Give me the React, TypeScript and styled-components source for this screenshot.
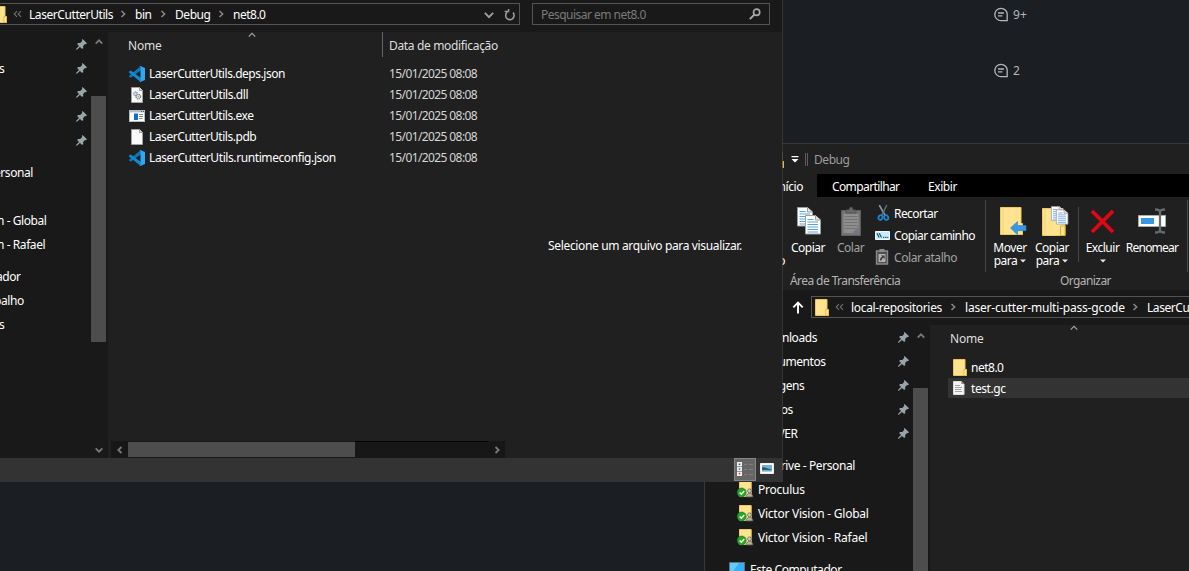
import React from "react";
import styled, { createGlobalStyle, css } from "styled-components";

const GlobalStyle = createGlobalStyle`
  * { box-sizing: border-box; }
  body { margin: 0; background: #1b1e23; overflow: hidden; }
  svg { display: block; flex: none; }
`;

/* ---------- desktop and window frames ---------- */

const Desktop = styled.main`
  position: relative;
  width: 1189px;
  height: 571px;
  overflow: hidden;
  background: #1b1e23;
  color: #fff;
  font: 12px/17px "Noto Sans", "Open Sans", sans-serif;
  letter-spacing: -0.43px;
  white-space: nowrap;
`;

const FrontWindow = styled.section`
  position: absolute;
  z-index: 2;
  left: 0;
  top: 0;
  width: 783px;
  height: 482px;
  display: flex;
  flex-direction: column;
  overflow: hidden;
  background: #202020;
  background-clip: padding-box;
  border-right: 1px solid rgba(62, 62, 62, 0.75);
`;

const BackWindow = styled.section`
  position: absolute;
  z-index: 1;
  left: 704px;
  top: 143px;
  width: 520px;
  height: 460px;
  display: flex;
  flex-direction: column;
  overflow: hidden;
  background: #202020;
  border: 1px solid #373839;
`;

const Counters = styled.aside`
  position: absolute;
  left: 994px;
  top: 6px;
  display: flex;
  flex-direction: column;
  gap: 39px;
`;

const Counter = styled.div`
  display: flex;
  align-items: center;
  gap: 5px;
  height: 17px;
  color: #b4b6b9;
  letter-spacing: 0.2px;
`;

const Text = styled.span<{ $track?: number }>`
  flex: none;
  letter-spacing: ${(p) => p.$track ?? -0.43}px;
`;

/* ---------- address row ---------- */

const AddressRow = styled.div<{ $compact?: boolean }>`
  flex: none;
  display: flex;
  background: #191919;
  ${(p) =>
    p.$compact
      ? css`
          height: 35px;
          padding: 6px 0 0 87px;
          gap: 7px;
        `
      : css`
          height: 32px;
          padding-top: 3px;
          gap: 12px;
        `}
`;

const PathBox = styled.div<{ $wide?: boolean }>`
  display: flex;
  align-items: center;
  height: 22px;
  flex: none;
  width: ${(p) => (p.$wide ? "460px" : "521px")};
  margin-left: ${(p) => (p.$wide ? "0" : "-1px")};
  border: 1px solid #535353;
  padding-left: ${(p) => (p.$wide ? "3px" : "0")};
`;

const FolderSlot = styled.span<{ $cut?: boolean }>`
  display: flex;
  flex: none;
  width: ${(p) => (p.$cut ? "7px" : "14px")};
  justify-content: flex-end;
  overflow: hidden;
`;

const Back = styled.span`
  display: flex;
  flex: none;
  width: 22px;
  padding-right: 2px;
  justify-content: center;
`;

const Crumb = styled.span<{ $w: number }>`
  display: flex;
  flex: none;
  align-items: center;
  justify-content: space-between;
  width: ${(p) => p.$w}px;
  padding-right: 8px;
`;

const PathTools = styled.span`
  display: flex;
  align-items: center;
  gap: 10px;
  margin-left: auto;
  padding: 1px 3px 0 0;
`;

const SearchBox = styled.div`
  display: flex;
  align-items: center;
  justify-content: space-between;
  width: 238px;
  height: 22px;
  padding: 0 8px;
  border: 1px solid #535353;
  color: #7b7b7b;
`;

const UpButton = styled.span`
  display: flex;
  align-items: center;
  width: 12px;
  height: 22px;
`;

/* ---------- window body ---------- */

const Body = styled.div`
  flex: 1;
  min-height: 0;
  display: flex;
`;

const Sidebar = styled.nav<{ $w: number }>`
  flex: none;
  display: flex;
  width: ${(p) => p.$w}px;
  background: #191919;
`;

const Tree = styled.ul`
  flex: 1;
  min-width: 0;
  margin: 0;
  padding: 0;
  list-style: none;
`;

const TreeRow = styled.li<{ $gap?: number; $indent?: number }>`
  display: flex;
  align-items: center;
  height: 24px;
  margin-top: ${(p) => p.$gap ?? 0}px;
  padding: 0 4px 0 ${(p) => p.$indent ?? 0}px;
`;

const PinSlot = styled.span`
  margin-left: auto;
`;

const TreeIcon = styled.span<{ $w: number }>`
  flex: none;
  width: ${(p) => p.$w}px;
`;

const VScroll = styled.div<{ $drop?: number }>`
  flex: none;
  display: flex;
  flex-direction: column;
  align-items: center;
  width: 15px;
  margin-right: 2px;
  padding-top: ${(p) => p.$drop ?? 0}px;
`;

const VArrow = styled.span<{ $h: number }>`
  flex: none;
  display: flex;
  align-items: center;
  height: ${(p) => p.$h}px;
`;

const VThumb = styled.span<{ $top: number; $h: number }>`
  flex: none;
  width: 15px;
  height: ${(p) => p.$h}px;
  margin-top: ${(p) => p.$top}px;
  background: #4d4d4d;
`;

const Spacer = styled.span`
  flex: 1;
`;

const FilePane = styled.div`
  flex: none;
  display: flex;
  flex-direction: column;
  width: 397px;
`;

const Columns = styled.div`
  display: flex;
  height: 31px;
  color: #dedede;
`;

const NameColumn = styled.div`
  flex: none;
  display: grid;
  grid-template-columns: 120px 12px;
  width: 275px;
  height: 25px;
  padding: 0 0 0 20px;
`;

const NameHead = styled.span`
  padding-top: 5px;
  letter-spacing: -0.2px;
`;

const SortMark = styled.span`
  margin-top: -1px;
`;

const DateColumn = styled.div`
  height: 25px;
  border-left: 1px solid #636363;
  margin-left: -1px;
  padding: 5px 0 0 6px;
  letter-spacing: -0.34px;
`;

const FileRow = styled.div`
  display: grid;
  grid-template-columns: 20px 240px auto;
  align-items: center;
  height: 21px;
  padding-left: 21px;
`;

const DateCell = styled.span`
  color: #d6d6d6;
  letter-spacing: -0.6px;
`;

const HScroll = styled.div`
  display: flex;
  align-items: center;
  width: 394px;
  height: 17px;
  margin: auto 0 0 3px;
  background: #171717;
`;

const HArrow = styled.span<{ $w: number }>`
  display: flex;
  justify-content: center;
  width: ${(p) => p.$w}px;
`;

const HThumb = styled.span`
  width: 227px;
  height: 15px;
  background: #4d4d4d;
`;

const HTrack = styled.span`
  width: 133px;
  height: 17px;
  border-top: 1px solid #000;
`;

const Preview = styled.div`
  flex: 1;
  display: flex;
  justify-content: center;
  padding: 205px 0 0 3px;
  letter-spacing: -0.35px;
`;

const StatusBar = styled.footer`
  flex: none;
  display: flex;
  align-items: flex-start;
  justify-content: flex-end;
  gap: 4px;
  height: 24px;
  padding-right: 8px;
  background: #333;
`;

const ViewToggle = styled.span<{ $on?: boolean }>`
  display: flex;
  align-items: center;
  justify-content: center;
  width: ${(p) => (p.$on ? "22px" : "14px")};
  height: ${(p) => (p.$on ? "23px" : "21px")};
  background: ${(p) => (p.$on ? "#666" : "transparent")};
  border: ${(p) => (p.$on ? "1px solid #868686" : "none")};
`;

/* ---------- ribbon ---------- */

const TitleBar = styled.header`
  flex: none;
  display: flex;
  align-items: center;
  height: 30px;
  padding-left: 65px;
  color: #9c9c9c;
`;

const TitleIcon = styled.span`
  width: 21px;
`;

const QuickDivider = styled.span`
  width: 3px;
  height: 13px;
  margin: 0 6px 0 6px;
  border: solid #5e5e5e;
  border-width: 0 1px;
`;

const Tabs = styled.div`
  flex: none;
  display: flex;
  height: 23px;
  line-height: 25px;
  background: #000;
`;

const Tab = styled.span<{ $w: number }>`
  width: ${(p) => p.$w}px;
  padding-left: 15px;
`;

const ActiveTab = styled(Tab)`
  padding: 0 14px 0 0;
  background: #202020;
  text-align: right;
`;

const Ribbon = styled.div`
  flex: none;
  display: flex;
  height: 93px;
  padding-top: 3px;
`;

const Group = styled.div<{ $w: number }>`
  flex: none;
  display: flex;
  flex-direction: column;
  width: ${(p) => p.$w}px;
`;

const GroupRule = styled.span`
  flex: none;
  width: 1px;
  height: 72px;
  background: #484848;
`;

const InnerRule = styled.span`
  flex: none;
  width: 1px;
  height: 55px;
  margin: 7px 0 0 8px;
  background: #484848;
`;

const Tools = styled.div`
  display: flex;
  height: 72px;
`;

const BigButton = styled.div<{ $w: number; $dim?: boolean }>`
  flex: none;
  display: flex;
  flex-direction: column;
  align-items: center;
  width: ${(p) => p.$w}px;
  line-height: 13px;
  letter-spacing: -0.48px;
  color: ${(p) => (p.$dim ? "#a3a3a3" : "#fff")};
`;

const BigIcon = styled.span<{ $pad?: number }>`
  display: flex;
  align-items: center;
  height: 41px;
  padding: 1px 0 0 ${(p) => p.$pad ?? 0}px;
`;

const PinLabel = styled.div`
  width: 80px;
  padding-top: 54px;
  line-height: 13px;
  text-align: right;
`;

const Menu = styled.span`
  display: flex;
  align-items: center;
  gap: 3px;
  height: 13px;
`;

const SmallList = styled.div`
  display: flex;
  flex-direction: column;
  padding: 2px 0 0 7px;
`;

const SmallButton = styled.div<{ $dim?: boolean }>`
  display: grid;
  grid-template-columns: 17px auto;
  align-items: center;
  height: 22px;
  color: ${(p) => (p.$dim ? "#a3a3a3" : "#fff")};
`;

const Caption = styled.div<{ $pad: number }>`
  padding-left: ${(p) => p.$pad}px;
  color: #b5b5b5;
  letter-spacing: -0.58px;
`;

const Listing = styled.div`
  flex: 1;
  margin-left: 1px;
`;

const ListHead = styled(Columns)`
  height: 32px;
  margin-left: -1px;
`;

const ListRow = styled.div<{ $selected?: boolean }>`
  display: grid;
  grid-template-columns: 18px auto;
  align-items: center;
  height: 21px;
  margin-left: 17px;
  padding-left: 5px;
  border-bottom: 1px solid #202020;
  background: ${(p) => (p.$selected ? "#333" : "transparent")};
`;

/* ---------- icons ---------- */

const Folder = () => (
  <svg width="14" height="17" viewBox="0 0 14 17">
    <path d="M.5.5h11.5v10h1.5v6H.5z" fill="#ffe391" stroke="#edc64f" />
    <path d="M10.8 10.5h2.7v6h-2.7z" fill="#ffe799" stroke="#dfb236" strokeWidth=".8" />
  </svg>
);

const chevrons: Record<string, string> = {
  right: "M2.5 1 5.7 4 2.5 7",
  left: "M5.5 1 2.3 4 5.5 7",
  up: "M.7 5.7 4 2.3 7.3 5.7",
  down: "M.7 2.3 4 5.7 7.3 2.3",
};

type ChevronProps = { dir?: string; size?: number; color?: string; weight?: number };

const Chevron = ({ dir = "right", size = 8, color = "#8a8a8a", weight = 1.5 }: ChevronProps) => (
  <svg width={size} height={size} viewBox="0 0 8 8" fill="none" stroke={color} strokeWidth={weight}>
    <path d={chevrons[dir]} />
  </svg>
);

const DoubleBack = () => (
  <svg width="9" height="8" viewBox="0 0 9 8" fill="none" stroke="#6f6f6f" strokeWidth="1.1">
    <path d="M4 1.2 1.2 4 4 6.8M8 1.2 5.2 4 8 6.8" />
  </svg>
);

const Pin = () => (
  <svg width="11" height="11" viewBox="0 0 11 11">
    <path d="M6.6 0 11 4.2 9.9 5.2 9 5 7.1 7l.2 2.1-1.1 1L3.9 7.9.9 10.8l-.8-.3.1-.8L3 6.9 1.1 4.9l1-1 2.1.1L6.2 2 5.9 1z" fill="#9aa5ab" />
  </svg>
);

const Refresh = () => (
  <svg width="12" height="12" viewBox="0 0 12 12" fill="none" stroke="#9a9a9a">
    <path d="M9 3.6A4.2 4.2 0 1 1 3.2 3.2" strokeWidth="1.6" />
    <path d="M5.6 0v4.6M5.6 4h4.6" strokeWidth="1.5" transform="rotate(-90 6 3.4) translate(1.2 -2)" />
  </svg>
);

const Magnifier = () => (
  <svg width="12" height="12" viewBox="0 0 12 12" fill="none" stroke="#a8a8a8">
    <circle cx="7.6" cy="4.2" r="3.1" strokeWidth="1.7" />
    <path d="M5.3 6.6.8 11.1" strokeWidth="2" />
  </svg>
);

const VsCode = () => (
  <svg width="16" height="16" viewBox="0 0 16 16">
    <path d="M11.3.4 12 4.2 1.8 11.8 0 10.6V9.8z" fill="#0b76b8" />
    <path d="M0 5.5 1.7 4.4 12 12l-.7 3.8L0 6.4z" fill="#1489d0" />
    <path d="M11.3 0 16 2v12l-4.7 2-.9-.6 1.1-.5V1.2L10.4.6z" fill="#2ea8f5" />
  </svg>
);

const Page = ({ gear = false }: { gear?: boolean }) => (
  <svg width="16" height="16" viewBox="0 0 16 16">
    <path d="M2.5.5h8l3 3v12h-11z" fill="#fafafa" stroke="#a2a2a2" />
    <path d="M10.5.5v3h3" fill="#ddd" stroke="#a2a2a2" />
    {gear && (
      <g fill="#dfe3e5" stroke="#7f8a8f">
        <circle cx="6.5" cy="6.8" r="1.8" strokeWidth="1.3" strokeDasharray="1.2 .5" />
        <circle cx="9.3" cy="9.6" r="2.3" strokeWidth="1.3" strokeDasharray="1.2 .5" />
        <circle cx="9.3" cy="9.6" r=".7" fill="#98a4a9" stroke="none" />
      </g>
    )}
  </svg>
);

const Exe = () => (
  <svg width="16" height="12" viewBox="0 0 16 12">
    <path d="M0 0h16v12H0z" fill="#b6bcc0" />
    <path d="M1 2.4h14V11H1z" fill="#fff" />
    <path d="M12 1h1v1h-1zM14 1h1v1h-1z" fill="#555" />
    <path d="M5 3.5h4V10H5z" fill="#0e6fce" />
    <path d="M10 4h4v1h-4zM10 6h4v1h-4zM10 8h3.5v1H10z" fill="#8b8b8b" />
  </svg>
);

const TextDoc = () => (
  <svg width="12" height="14" viewBox="0 0 12 14">
    <path d="M.5.5h8L11 3v10.5H.5z" fill="#f5f5f5" stroke="#ddd" />
    <path d="M8.3 0v3h3.2" fill="#888" />
    <path d="M2 4.5h5M2 6.5h7M2 8.5h6M2 10.5h7" stroke="#a4a4a4" />
  </svg>
);

const SyncedFolder = () => (
  <svg width="17" height="17" viewBox="0 0 17 17">
    <path d="M2.5.5h11.7v15H2.5z" fill="#ffe38f" stroke="#f0cc62" />
    <circle cx="12.5" cy="9.8" r="1.9" fill="#d8d0b0" stroke="#6d6c68" strokeWidth=".9" />
    <path d="M9.3 15.8c0-4.5 6.4-4.5 6.4 0z" fill="#b9b5a5" stroke="#6d6c68" strokeWidth=".9" />
    <circle cx="4.7" cy="11.5" r="4.5" fill="#28a428" stroke="#0e7f18" strokeWidth=".6" />
    <path d="m2.6 11.5 1.7 1.7 2.9-3.3" fill="none" stroke="#fff" strokeWidth="1.5" />
  </svg>
);

const Monitor = () => (
  <svg width="16" height="14" viewBox="0 0 16 14">
    <path d="M.5.5h15v11H.5z" fill="#36b0f2" stroke="#5c7488" />
    <path d="M1 1h9L3 11H1z" fill="#66c9f8" />
    <path d="M4 13h8v1H4z" fill="#889" />
  </svg>
);

const Comment = () => (
  <svg width="14" height="15" viewBox="0 0 14 15" fill="none" stroke="#b4b6b9" strokeWidth="1.3">
    <path d="M13.2 13.7H7A6.2 6.2 0 1 1 13.2 7.4z" />
    <path d="M4 6h6M4 8.9h4.4" />
  </svg>
);

const DetailsView = () => (
  <svg width="18" height="15" viewBox="0 0 18 15">
    <path d="M1 0h5v14H1z" fill="#f2f2f2" />
    <path d="M2.7 1.5h1.6v1.6H2.7z" fill="#555" />
    <path d="M2.7 6.2h1.6v1.6H2.7z" fill="#3f7fb5" />
    <path d="M2.7 10.8h1.6v1.6H2.7z" fill="#d03b3b" />
    <path d="M1 4.6h5M1 9.4h5" stroke="#777" strokeWidth=".8" />
    <path d="M8 2.5h3M13 2.5h4M8 7.5h3M13 7.5h4M8 12.5h3M13 12.5h4" stroke="#7e7e7e" />
  </svg>
);

const PictureView = () => (
  <svg width="14" height="11" viewBox="0 0 14 11">
    <path d="M.5.5h13v10H.5z" fill="#fff" stroke="#eee" />
    <path d="M2 2h10v7H2z" fill="#6fb0e2" />
    <path d="M2 4.5c3-1 6 1.5 10 2.2v.8H2z" fill="#2d5e66" />
    <path d="M2 7.5h10V9H2z" fill="#a5d0ea" />
  </svg>
);

const Sheet = ({ x, y, s = 1 }: { x: number; y: number; s?: number }) => (
  <g transform={`translate(${x} ${y}) scale(${s})`}>
    <path d="M.5.5h10L15.5 5v14H.5z" fill="#fff" stroke="#9a9fa4" />
    <path d="M10.5.5V5h5" fill="#e2e2e2" stroke="#9a9fa4" />
    <path d="M2.5 4.5h6M2.5 7h10.5M2.5 9.5h10.5M2.5 12h10.5M2.5 14.5h10.5M2.5 17h10.5" stroke="#5ea0dc" />
  </g>
);

const CopyIcon = () => (
  <svg width="25" height="28" viewBox="0 0 25 28">
    <Sheet x={0} y={0} />
    <Sheet x={8} y={8} />
  </svg>
);

const PasteIcon = () => (
  <svg width="20" height="29" viewBox="0 0 20 29">
    <path d="M.5 3.5h19v25H.5z" fill="#747474" stroke="#5e5e5e" />
    <path d="M2.5 7h15v19h-15z" fill="#8e8e8e" />
    <path d="M11 26.5 17.5 19v7.5z" fill="#76768a" />
    <path d="M5 6V3h3l1-2.5h2L12 3h3v3z" fill="#696969" stroke="#555" />
    <path d="M3.5 9.5h13M3.5 12.5h13M3.5 15.5h13M3.5 18.5h13M3.5 21.5h11" stroke="#737373" />
  </svg>
);

const Scissors = () => (
  <svg width="13" height="16" viewBox="0 0 13 16" fill="none">
    <path d="M2.2 0 8.2 10.5" stroke="#8299a8" strokeWidth="1.6" />
    <path d="M9.8 0 4.8 10.5" stroke="#5d6e7a" strokeWidth="1.5" />
    <ellipse cx="3.5" cy="12.6" rx="2" ry="2.4" stroke="#1e83c8" strokeWidth="1.8" transform="rotate(25 3.5 12.6)" />
    <ellipse cx="9.2" cy="12.6" rx="2" ry="2.4" stroke="#1e83c8" strokeWidth="1.8" transform="rotate(-25 9.2 12.6)" />
  </svg>
);

const WideGlyph = styled.span`
  margin-left: -2px;
`;

const PathIcon = () => (
  <WideGlyph>
    <svg width="15" height="9" viewBox="0 0 15 9">
      <path d="M.5.5h14v8H.5z" fill="#c9ecfb" stroke="#eaf8ff" />
      <path d="m2 2.2 2.2 4.3M4.3 2.2l2.2 4.3M8 6.3h1.3M10.2 6.3h1.3M12.3 6.3h1" stroke="#15506f" strokeWidth="1.2" />
    </svg>
  </WideGlyph>
);

const ShortcutIcon = () => (
  <WideGlyph>
    <svg width="14" height="16" viewBox="0 0 14 16">
      <path d="M1.5 2h11v13h-11z" fill="#4f4f4f" stroke="#8a8a8a" strokeWidth="1.4" />
      <path d="M4.5 0h5v3h-5z" fill="#8a8a8a" />
      <path d="M3.5 5h7v8h-7z" fill="#b1b1b1" />
      <path d="M5 11.5c0-2 .6-3 2.4-3.7L6 6.4h3.6V10L8.4 8.8C7.2 9.4 6.6 10 6.6 11.5z" fill="#3a3a3a" />
    </svg>
  </WideGlyph>
);

const MoveIcon = () => (
  <svg width="27" height="28" viewBox="0 0 27 28">
    <path d="M.5.5H21v16h1.5v11H.5z" fill="#ffe391" stroke="#eecb5f" />
    <path d="M3 1v26" stroke="#f3d372" />
    <path d="m10.500 21 7-6.500v4H26v5.200h-8.500v4z" fill="#3797e4" stroke="#2b80c8" strokeWidth=".6" />
  </svg>
);

const CopyToIcon = () => (
  <svg width="27" height="30" viewBox="0 0 27 30">
    <path d="M.5 2.5H21v16h2v11H.5z" fill="#ffe391" stroke="#eecb5f" />
    <path d="M3 3v26" stroke="#f3d372" />
    <path d="M18.5 20H23v9.5h-4.5z" fill="#ffe391" stroke="#dcb23c" />
    <Sheet x={9} y={0} s={0.77} />
    <Sheet x={14} y={3.5} s={0.77} />
  </svg>
);

const DeleteIcon = () => (
  <svg width="25" height="25" viewBox="0 0 25 25" fill="none" stroke="#e30613" strokeWidth="3.8">
    <path d="m2 2 21 21M23 2 2 23" />
  </svg>
);

const RenameIcon = () => (
  <svg width="29" height="26" viewBox="0 0 29 26">
    <path d="M.5 7.5h27v11H.5z" fill="#fff" stroke="#a9adb0" />
    <path d="M3 10h13v6H3z" fill="#3797e4" />
    <path d="M17 1.5c3 0 5 .5 5 2.5 0-2 2-2.5 5-2.5M17 24.5c3 0 5-.5 5-2.5 0 2 2 2.5 5 2.5M22 3v20" fill="none" stroke="#666b6e" strokeWidth="2.3" />
  </svg>
);

const Down = () => (
  <svg width="6" height="4" viewBox="0 0 6 4">
    <path d="M0 .5h6L3 3.5z" fill="#e5e5e5" />
  </svg>
);

const QuickMenu = () => (
  <svg width="8" height="7" viewBox="0 0 8 7" fill="#fff">
    <path d="M.5 0h7v1.2h-7zM.5 3h7L4 6.5z" />
  </svg>
);

const UpArrow = () => (
  <svg width="12" height="13" viewBox="0 0 12 13" fill="none" stroke="#fff" strokeWidth="1.9">
    <path d="M6 12.5V1.8M1.3 6.3 6 1.6l4.7 4.7" />
  </svg>
);

/* ---------- content ---------- */

const files = [
  { name: "LaserCutterUtils.deps.json", icon: <VsCode />, track: -0.47 },
  { name: "LaserCutterUtils.dll", icon: <Page gear />, track: -0.43 },
  { name: "LaserCutterUtils.exe", icon: <Exe />, track: -0.45 },
  { name: "LaserCutterUtils.pdb", icon: <Page />, track: -0.45 },
  { name: "LaserCutterUtils.runtimeconfig.json", icon: <VsCode />, track: -0.41 },
];

const frontTree = [
  { label: "", pin: true },
  { label: "s", pin: true, shift: -1 },
  { label: "", pin: true },
  { label: "", pin: true },
  { label: "", pin: true },
  { label: "ersonal", gap: 8, shift: -6 },
  { label: "n - Global", gap: 24, shift: -3 },
  { label: "n - Rafael", shift: -3 },
  { label: "ador", gap: 8, shift: -4 },
  { label: "balho", shift: -6 },
  { label: "s", shift: -1 },
];

const ClippedLabel = styled.span<{ $shift: number }>`
  margin-left: ${(p) => p.$shift}px;
`;

const pinned = ["Downloads", "Documentos", "Imagens", "Vídeos", "SERVER"];
const synced = ["Proculus", "Victor Vision - Global", "Victor Vision - Rafael"];

function FrontExplorer() {
  return (
    <FrontWindow>
      <AddressRow>
        <PathBox>
          <FolderSlot $cut><Folder /></FolderSlot>
          <Back><DoubleBack /></Back>
          <Crumb $w={106}><Text>LaserCutterUtils</Text><Chevron /></Crumb>
          <Crumb $w={40}><Text>bin</Text><Chevron /></Crumb>
          <Crumb $w={58}><Text>Debug</Text><Chevron /></Crumb>
          <Text $track={-0.5}>net8.0</Text>
          <PathTools><Chevron dir="down" size={10} color="#a0a0a0" /><Refresh /></PathTools>
        </PathBox>
        <SearchBox><Text $track={-0.52}>Pesquisar em net8.0</Text><Magnifier /></SearchBox>
      </AddressRow>
      <Body>
        <Sidebar $w={108}>
          <Tree>
            {frontTree.map((r, i) => (
              <TreeRow key={i} $gap={r.gap}>
                <ClippedLabel $shift={r.shift ?? 0}>{r.label}</ClippedLabel>
                {r.pin && <PinSlot><Pin /></PinSlot>}
              </TreeRow>
            ))}
          </Tree>
          <VScroll>
            <VArrow $h={19}><Chevron dir="up" color="#7a7a7a" weight={1.7} /></VArrow>
            <VThumb $top={45} $h={246} />
            <Spacer />
            <VArrow $h={17}><Chevron dir="down" color="#7a7a7a" weight={1.8} /></VArrow>
          </VScroll>
        </Sidebar>
        <FilePane>
          <Columns>
            <NameColumn>
              <NameHead>Nome</NameHead>
              <SortMark><Chevron dir="up" color="#a5a5a5" weight={1.1} /></SortMark>
            </NameColumn>
            <DateColumn>Data de modificação</DateColumn>
          </Columns>
          {files.map((f) => (
            <FileRow key={f.name}>
              {f.icon}
              <Text $track={f.track}>{f.name}</Text>
              <DateCell>15/01/2025 08:08</DateCell>
            </FileRow>
          ))}
          <HScroll>
            <HArrow $w={17}><Chevron dir="left" color="#7a7a7a" weight={1.8} /></HArrow>
            <HThumb />
            <HTrack />
            <HArrow $w={17}><Chevron dir="right" color="#7a7a7a" weight={1.8} /></HArrow>
          </HScroll>
        </FilePane>
        <Preview>Selecione um arquivo para visualizar.</Preview>
      </Body>
      <StatusBar>
        <ViewToggle $on><DetailsView /></ViewToggle>
        <ViewToggle><PictureView /></ViewToggle>
      </StatusBar>
    </FrontWindow>
  );
}

function BackExplorer() {
  return (
    <BackWindow>
      <TitleBar>
        <TitleIcon><Folder /></TitleIcon>
        <QuickMenu />
        <QuickDivider />
        <Text>Debug</Text>
      </TitleBar>
      <Tabs>
        <ActiveTab $w={112}>Início</ActiveTab>
        <Tab $w={96}><Text $track={-0.61}>Compartilhar</Text></Tab>
        <Tab $w={70}>Exibir</Tab>
      </Tabs>
      <Ribbon>
        <Group $w={280}>
          <Tools>
            <PinLabel>Rápido</PinLabel>
            <BigButton $w={46}><BigIcon $pad={3}><CopyIcon /></BigIcon>Copiar</BigButton>
            <BigButton $w={39} $dim><BigIcon><PasteIcon /></BigIcon>Colar</BigButton>
            <SmallList>
              <SmallButton><Scissors /><Text $track={-0.57}>Recortar</Text></SmallButton>
              <SmallButton><PathIcon /><Text $track={-0.58}>Copiar caminho</Text></SmallButton>
              <SmallButton $dim><ShortcutIcon /><Text $track={-0.43}>Colar atalho</Text></SmallButton>
            </SmallList>
          </Tools>
          <Caption $pad={85}>Área de Transferência</Caption>
        </Group>
        <GroupRule />
        <Group $w={201}>
          <Tools>
            <BigButton $w={48}><BigIcon $pad={6}><MoveIcon /></BigIcon>Mover<Menu>para <Down /></Menu></BigButton>
            <BigButton $w={36}><BigIcon $pad={6}><CopyToIcon /></BigIcon>Copiar<Menu>para <Down /></Menu></BigButton>
            <InnerRule />
            <BigButton $w={47}><BigIcon><DeleteIcon /></BigIcon>Excluir<Menu><Down /></Menu></BigButton>
            <BigButton $w={52}><BigIcon><RenameIcon /></BigIcon><Text $track={-0.78}>Renomear</Text></BigButton>
          </Tools>
          <Caption $pad={74}>Organizar</Caption>
        </Group>
        <GroupRule />
      </Ribbon>
      <AddressRow $compact>
        <UpButton><UpArrow /></UpButton>
        <PathBox $wide>
          <FolderSlot><Folder /></FolderSlot>
          <Back><DoubleBack /></Back>
          <Crumb $w={114}><Text $track={-0.33}>local-repositories</Text><Chevron /></Crumb>
          <Crumb $w={182}><Text $track={-0.2}>laser-cutter-multi-pass-gcode</Text><Chevron /></Crumb>
          <Text>LaserCutterUtils</Text>
        </PathBox>
      </AddressRow>
      <Body>
        <Sidebar $w={225}>
          <Tree>
            {pinned.map((label) => (
              <TreeRow key={label} $indent={53}>
                {label}
                <PinSlot><Pin /></PinSlot>
              </TreeRow>
            ))}
            <TreeRow $gap={8} $indent={45}><Text $track={-0.4}>OneDrive - Personal</Text></TreeRow>
            {synced.map((label) => (
              <TreeRow key={label} $indent={32}>
                <TreeIcon $w={21}><SyncedFolder /></TreeIcon>
                <Text $track={-0.24}>{label}</Text>
              </TreeRow>
            ))}
            <TreeRow $gap={8} $indent={24}>
              <TreeIcon $w={21}><Monitor /></TreeIcon>
              Este Computador
            </TreeRow>
          </Tree>
          <VScroll $drop={1}>
            <VArrow $h={19}><Chevron dir="up" color="#7a7a7a" weight={1.7} /></VArrow>
            <VThumb $top={43} $h={220} />
          </VScroll>
        </Sidebar>
        <Listing>
          <ListHead>
            <NameColumn>
              <NameHead>Nome</NameHead>
              <SortMark><Chevron dir="up" color="#a5a5a5" weight={1.1} /></SortMark>
            </NameColumn>
          </ListHead>
          <ListRow><Folder /><Text $track={-0.5}>net8.0</Text></ListRow>
          <ListRow $selected><TextDoc /><Text>test.gc</Text></ListRow>
        </Listing>
      </Body>
    </BackWindow>
  );
}

export default function App() {
  return (
    <Desktop>
      <GlobalStyle />
      <Counters>
        <Counter><Comment />9+</Counter>
        <Counter><Comment />2</Counter>
      </Counters>
      <BackExplorer />
      <FrontExplorer />
    </Desktop>
  );
}
